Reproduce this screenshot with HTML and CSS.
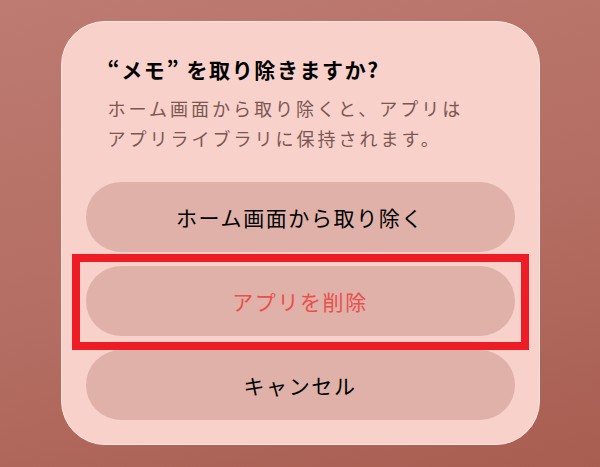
FILE: index.html
```html
<!DOCTYPE html>
<html lang="ja">
<head>
<meta charset="utf-8">
<link rel="stylesheet" href="styles.css">
</head>
<body>
<div class="page">
  <div class="sheet">
    <div class="head">
      <h1 class="title">“メモ” を取り除きますか?</h1>
      <p class="desc">ホーム画面から取り除くと、アプリは<br>アプリライブラリに保持されます。</p>
    </div>
    <div class="actions">
      <button class="btn">ホーム画面から取り除く</button>
      <button class="btn btn-danger">アプリを削除<span class="mark"></span></button>
      <button class="btn">キャンセル</button>
    </div>
  </div>
</div>
</body>
</html>
```
FILE: styles.css
```css
html, body {
  margin: 0;
  padding: 0;
}
body {
  width: 600px;
  height: 467px;
  overflow: hidden;
  background: linear-gradient(165deg, #bd7b71 0%, #b46d62 55%, #a85e51 100%);
  font-family: "Noto Sans CJK JP", "Noto Sans", sans-serif;
}
.page {
  display: flex;
  justify-content: center;
  padding-top: 21px;
}
.sheet {
  width: 429px;
  padding: 33px 24px 24px;
  background: #f7d1ca;
  border: 1px solid #fde6de;
  border-radius: 44px;
}
.head {
  padding: 0 22px;
}
.title {
  margin: 0;
  font-size: 21px;
  line-height: 28px;
  font-weight: 700;
  letter-spacing: 1.6px;
  color: #000;
}
.desc {
  margin: 10px 0 0;
  font-size: 18px;
  line-height: 30px;
  letter-spacing: 3px;
  color: #7c5752;
}
.actions {
  margin-top: 29px;
  display: flex;
  flex-direction: column;
  gap: 14px;
}
.btn {
  position: relative;
  height: 70px;
  border: none;
  border-radius: 35px;
  background: #e0b1a9;
  font-family: inherit;
  font-size: 21px;
  font-weight: 400;
  letter-spacing: 1.6px;
  color: #000;
  padding: 0;
}
.btn-danger {
  color: #e8504c;
}
.mark {
  position: absolute;
  left: -14px;
  right: -14px;
  top: -12px;
  bottom: -14px;
  border: 8px solid #ee1c25;
}
```
